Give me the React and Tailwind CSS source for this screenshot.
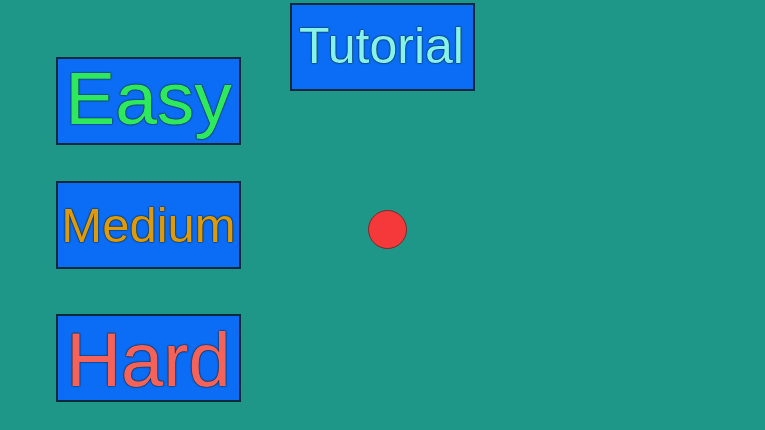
export default function App() {
  const box =
    "w-[185px] h-[88px] bg-[#0b6cf6] border-2 border-[#0c2a3c] flex items-center justify-center leading-none [font-family:'Liberation_Sans',Arial,sans-serif] [text-shadow:0_0_1px_#0a2a30,0_0_1px_#0a2a30,0_0_2px_#0a2a30]";
  return (
    <div className="w-[765px] h-[430px] bg-[#1e9688] flex overflow-hidden">
      <div className="ml-[56px] pt-[57px] flex flex-col">
        <div className={box}>
          <span className="text-[75px] text-[#2ee85e] -mt-[6px]">Easy</span>
        </div>
        <div className={box + " mt-[36px]"}>
          <span className="text-[49px] text-[#dc9a0c]">Medium</span>
        </div>
        <div className={box + " mt-[45px] h-[87px]"}>
          <span className="text-[76px] text-[#f4625a] mt-[4px]">Hard</span>
        </div>
      </div>
      <div className="ml-[49px] pt-[3px] flex flex-col">
        <div className={box}>
          <span className="text-[50px] text-[#86f2ea] -mt-[3px] ml-[-2px]">Tutorial</span>
        </div>
        <div className="ml-[78px] mt-[119px] w-[39px] h-[39px] rounded-full bg-[#f5393a] border border-[#7a2a2a]" />
      </div>
    </div>
  );
}
